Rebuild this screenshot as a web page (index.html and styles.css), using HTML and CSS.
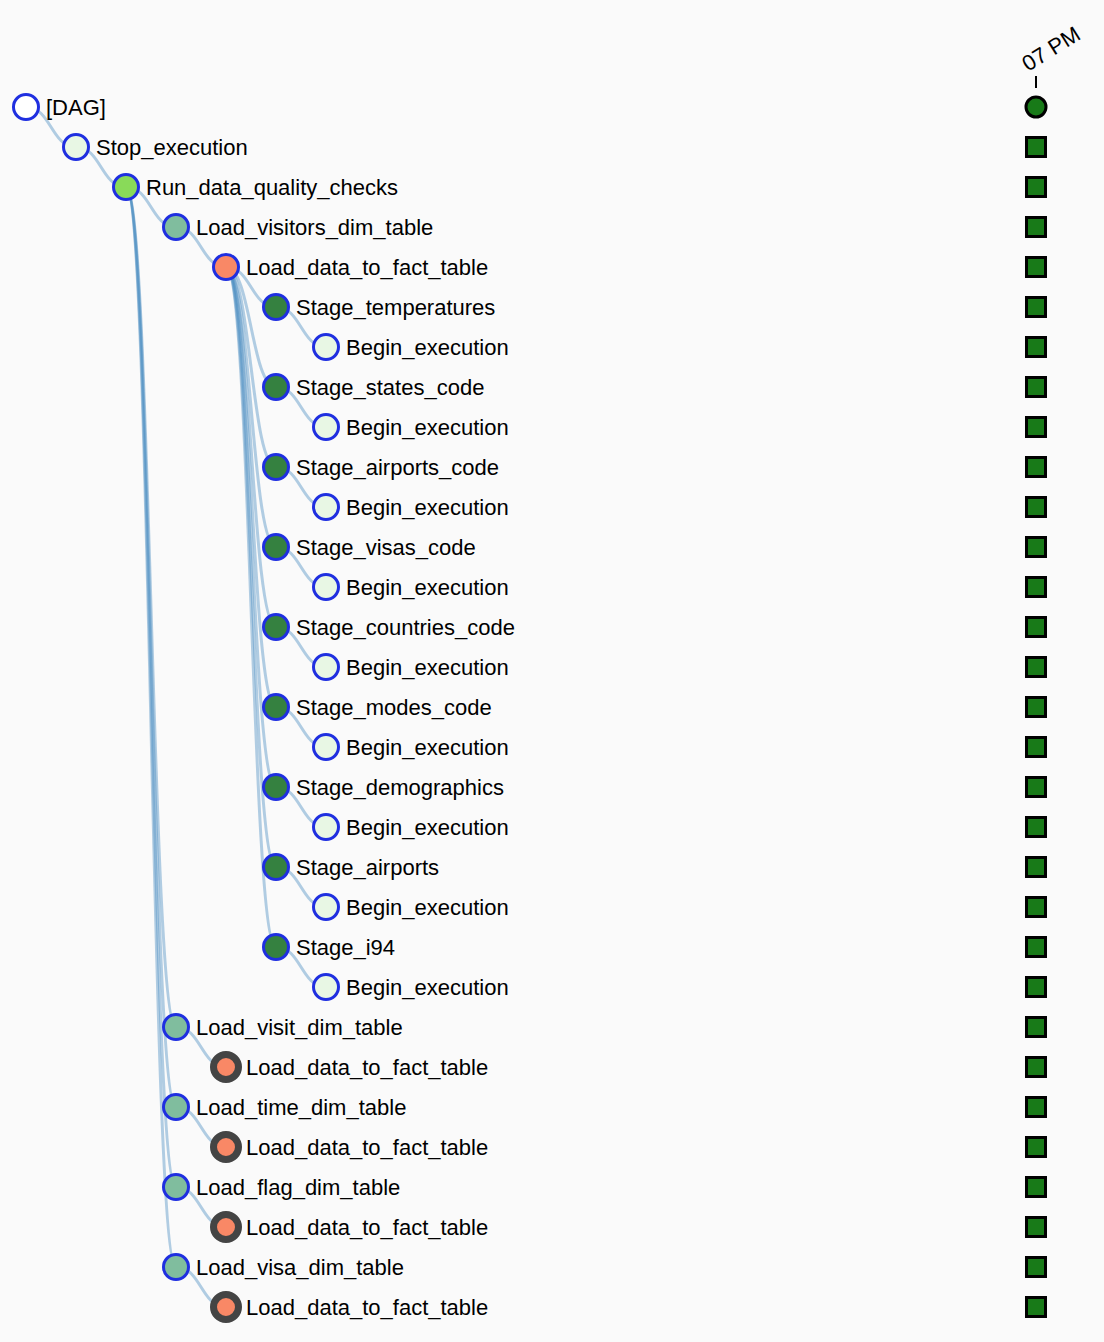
FILE: index.html
```html
<!DOCTYPE html>
<html lang="en">
<head>
<meta charset="utf-8">
<title>Tree View</title>
<link rel="stylesheet" href="styles.css">
</head>
<body>
<div class="tree-wrap">
<svg class="tree" width="1104" height="1342" viewBox="0 0 1104 1342" xmlns="http://www.w3.org/2000/svg">
  <g class="links">
    <path class="link" d="M26,107 C51,107 51,147 76,147"/>
    <path class="link" d="M76,147 C101,147 101,187 126,187"/>
    <path class="link" d="M126,187 C151,187 151,227 176,227"/>
    <path class="link" d="M126,187 C151,187 151,1027 176,1027"/>
    <path class="link" d="M126,187 C151,187 151,1107 176,1107"/>
    <path class="link" d="M126,187 C151,187 151,1187 176,1187"/>
    <path class="link" d="M126,187 C151,187 151,1267 176,1267"/>
    <path class="link" d="M176,227 C201,227 201,267 226,267"/>
    <path class="link" d="M226,267 C251,267 251,307 276,307"/>
    <path class="link" d="M226,267 C251,267 251,387 276,387"/>
    <path class="link" d="M226,267 C251,267 251,467 276,467"/>
    <path class="link" d="M226,267 C251,267 251,547 276,547"/>
    <path class="link" d="M226,267 C251,267 251,627 276,627"/>
    <path class="link" d="M226,267 C251,267 251,707 276,707"/>
    <path class="link" d="M226,267 C251,267 251,787 276,787"/>
    <path class="link" d="M226,267 C251,267 251,867 276,867"/>
    <path class="link" d="M226,267 C251,267 251,947 276,947"/>
    <path class="link" d="M276,307 C301,307 301,347 326,347"/>
    <path class="link" d="M276,387 C301,387 301,427 326,427"/>
    <path class="link" d="M276,467 C301,467 301,507 326,507"/>
    <path class="link" d="M276,547 C301,547 301,587 326,587"/>
    <path class="link" d="M276,627 C301,627 301,667 326,667"/>
    <path class="link" d="M276,707 C301,707 301,747 326,747"/>
    <path class="link" d="M276,787 C301,787 301,827 326,827"/>
    <path class="link" d="M276,867 C301,867 301,907 326,907"/>
    <path class="link" d="M276,947 C301,947 301,987 326,987"/>
    <path class="link" d="M176,1027 C201,1027 201,1067 226,1067"/>
    <path class="link" d="M176,1107 C201,1107 201,1147 226,1147"/>
    <path class="link" d="M176,1187 C201,1187 201,1227 226,1227"/>
    <path class="link" d="M176,1267 C201,1267 201,1307 226,1307"/>
  </g>

  <g class="nodes">
    <circle class="node n-dag" cx="26" cy="107" r="12.5"/>
    <circle class="node n-dummy" cx="76" cy="147" r="12.5"/>
    <circle class="node n-dq" cx="126" cy="187" r="12.5"/>
    <circle class="node n-dim" cx="176" cy="227" r="12.5"/>
    <circle class="node n-fact" cx="226" cy="267" r="12.5"/>
    <circle class="node n-stage" cx="276" cy="307" r="12.5"/>
    <circle class="node n-dummy" cx="326" cy="347" r="12.5"/>
    <circle class="node n-stage" cx="276" cy="387" r="12.5"/>
    <circle class="node n-dummy" cx="326" cy="427" r="12.5"/>
    <circle class="node n-stage" cx="276" cy="467" r="12.5"/>
    <circle class="node n-dummy" cx="326" cy="507" r="12.5"/>
    <circle class="node n-stage" cx="276" cy="547" r="12.5"/>
    <circle class="node n-dummy" cx="326" cy="587" r="12.5"/>
    <circle class="node n-stage" cx="276" cy="627" r="12.5"/>
    <circle class="node n-dummy" cx="326" cy="667" r="12.5"/>
    <circle class="node n-stage" cx="276" cy="707" r="12.5"/>
    <circle class="node n-dummy" cx="326" cy="747" r="12.5"/>
    <circle class="node n-stage" cx="276" cy="787" r="12.5"/>
    <circle class="node n-dummy" cx="326" cy="827" r="12.5"/>
    <circle class="node n-stage" cx="276" cy="867" r="12.5"/>
    <circle class="node n-dummy" cx="326" cy="907" r="12.5"/>
    <circle class="node n-stage" cx="276" cy="947" r="12.5"/>
    <circle class="node n-dummy" cx="326" cy="987" r="12.5"/>
    <circle class="node n-dim" cx="176" cy="1027" r="12.5"/>
    <circle class="node n-fact collapsed" cx="226" cy="1067" r="12.5"/>
    <circle class="node n-dim" cx="176" cy="1107" r="12.5"/>
    <circle class="node n-fact collapsed" cx="226" cy="1147" r="12.5"/>
    <circle class="node n-dim" cx="176" cy="1187" r="12.5"/>
    <circle class="node n-fact collapsed" cx="226" cy="1227" r="12.5"/>
    <circle class="node n-dim" cx="176" cy="1267" r="12.5"/>
    <circle class="node n-fact collapsed" cx="226" cy="1307" r="12.5"/>
  </g>

  <g class="labels">
    <text class="label" x="46" y="114.7">[DAG]</text>
    <text class="label" x="96" y="154.7">Stop_execution</text>
    <text class="label" x="146" y="194.7">Run_data_quality_checks</text>
    <text class="label" x="196" y="234.7">Load_visitors_dim_table</text>
    <text class="label" x="246" y="274.7">Load_data_to_fact_table</text>
    <text class="label" x="296" y="314.7">Stage_temperatures</text>
    <text class="label" x="346" y="354.7">Begin_execution</text>
    <text class="label" x="296" y="394.7">Stage_states_code</text>
    <text class="label" x="346" y="434.7">Begin_execution</text>
    <text class="label" x="296" y="474.7">Stage_airports_code</text>
    <text class="label" x="346" y="514.7">Begin_execution</text>
    <text class="label" x="296" y="554.7">Stage_visas_code</text>
    <text class="label" x="346" y="594.7">Begin_execution</text>
    <text class="label" x="296" y="634.7">Stage_countries_code</text>
    <text class="label" x="346" y="674.7">Begin_execution</text>
    <text class="label" x="296" y="714.7">Stage_modes_code</text>
    <text class="label" x="346" y="754.7">Begin_execution</text>
    <text class="label" x="296" y="794.7">Stage_demographics</text>
    <text class="label" x="346" y="834.7">Begin_execution</text>
    <text class="label" x="296" y="874.7">Stage_airports</text>
    <text class="label" x="346" y="914.7">Begin_execution</text>
    <text class="label" x="296" y="954.7">Stage_i94</text>
    <text class="label" x="346" y="994.7">Begin_execution</text>
    <text class="label" x="196" y="1034.7">Load_visit_dim_table</text>
    <text class="label" x="246" y="1074.7">Load_data_to_fact_table</text>
    <text class="label" x="196" y="1114.7">Load_time_dim_table</text>
    <text class="label" x="246" y="1154.7">Load_data_to_fact_table</text>
    <text class="label" x="196" y="1194.7">Load_flag_dim_table</text>
    <text class="label" x="246" y="1234.7">Load_data_to_fact_table</text>
    <text class="label" x="196" y="1274.7">Load_visa_dim_table</text>
    <text class="label" x="246" y="1314.7">Load_data_to_fact_table</text>
  </g>

  <g class="runs">
    <text class="run-label" x="1028" y="72" transform="rotate(-32 1028 72)">07 PM</text>
    <line class="tick" x1="1036" y1="76" x2="1036" y2="88"/>
    <circle class="state" cx="1036" cy="107" r="10"/>
    <rect class="state" x="1026.5" y="137.5" width="19" height="19"/>
    <rect class="state" x="1026.5" y="177.5" width="19" height="19"/>
    <rect class="state" x="1026.5" y="217.5" width="19" height="19"/>
    <rect class="state" x="1026.5" y="257.5" width="19" height="19"/>
    <rect class="state" x="1026.5" y="297.5" width="19" height="19"/>
    <rect class="state" x="1026.5" y="337.5" width="19" height="19"/>
    <rect class="state" x="1026.5" y="377.5" width="19" height="19"/>
    <rect class="state" x="1026.5" y="417.5" width="19" height="19"/>
    <rect class="state" x="1026.5" y="457.5" width="19" height="19"/>
    <rect class="state" x="1026.5" y="497.5" width="19" height="19"/>
    <rect class="state" x="1026.5" y="537.5" width="19" height="19"/>
    <rect class="state" x="1026.5" y="577.5" width="19" height="19"/>
    <rect class="state" x="1026.5" y="617.5" width="19" height="19"/>
    <rect class="state" x="1026.5" y="657.5" width="19" height="19"/>
    <rect class="state" x="1026.5" y="697.5" width="19" height="19"/>
    <rect class="state" x="1026.5" y="737.5" width="19" height="19"/>
    <rect class="state" x="1026.5" y="777.5" width="19" height="19"/>
    <rect class="state" x="1026.5" y="817.5" width="19" height="19"/>
    <rect class="state" x="1026.5" y="857.5" width="19" height="19"/>
    <rect class="state" x="1026.5" y="897.5" width="19" height="19"/>
    <rect class="state" x="1026.5" y="937.5" width="19" height="19"/>
    <rect class="state" x="1026.5" y="977.5" width="19" height="19"/>
    <rect class="state" x="1026.5" y="1017.5" width="19" height="19"/>
    <rect class="state" x="1026.5" y="1057.5" width="19" height="19"/>
    <rect class="state" x="1026.5" y="1097.5" width="19" height="19"/>
    <rect class="state" x="1026.5" y="1137.5" width="19" height="19"/>
    <rect class="state" x="1026.5" y="1177.5" width="19" height="19"/>
    <rect class="state" x="1026.5" y="1217.5" width="19" height="19"/>
    <rect class="state" x="1026.5" y="1257.5" width="19" height="19"/>
    <rect class="state" x="1026.5" y="1297.5" width="19" height="19"/>
  </g>
</svg>
</div>
</body>
</html>
```
FILE: styles.css
```css
html, body {
  margin: 0;
  padding: 0;
  background: #fafafa;
}

.tree-wrap {
  width: 1104px;
  height: 1342px;
  overflow: hidden;
}

.tree {
  display: block;
}

.link {
  fill: none;
  stroke: #4a8cc2;
  stroke-opacity: 0.42;
  stroke-width: 3;
}

.node {
  stroke: #1f2fe0;
  stroke-width: 3;
}

.n-dag { fill: #ffffff; }
.n-dummy { fill: #e8f7e4; }
.n-dq { fill: #89da59; }
.n-dim { fill: #80bd9e; }
.n-fact { fill: #f98866; }
.n-stage { fill: #358140; }

.node.collapsed {
  stroke: #444444;
  stroke-width: 7;
}

.label {
  font-family: "Liberation Sans", Arial, sans-serif;
  font-size: 22px;
  fill: #000000;
}

.run-label {
  font-family: "Liberation Sans", Arial, sans-serif;
  font-size: 22px;
  fill: #000000;
}

.tick {
  stroke: #000000;
  stroke-width: 2;
}

.state {
  fill: #187a18;
  stroke: #000000;
  stroke-width: 3;
}
```
